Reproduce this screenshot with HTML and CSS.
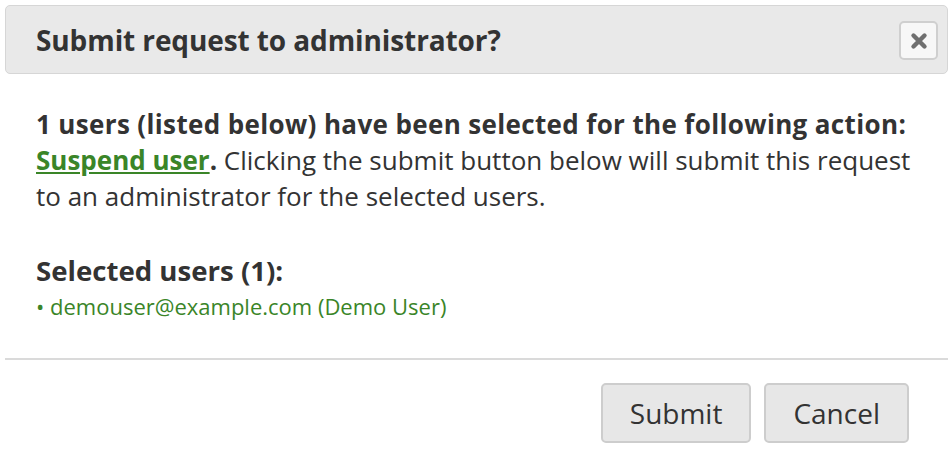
FILE: index.html
```html
<!DOCTYPE html>
<html>
<head>
<meta charset="utf-8">
<link rel="stylesheet" href="styles.css">
</head>
<body>
<div class="dialog">
  <div class="header">
    <h1 class="title">Submit request to administrator?</h1>
    <button class="close" aria-label="Close">
      <svg width="18" height="18" viewBox="0 0 18 18"><path d="M3.5 3.5 L14.5 14.5 M14.5 3.5 L3.5 14.5" stroke="#6f6f6f" stroke-width="4.4" stroke-linecap="round"/></svg>
    </button>
  </div>
  <div class="body">
    <p class="intro"><strong class="lead">1 users (listed below) have been selected for the following action:</strong><br><a class="action" href="#">Suspend user</a><strong>.</strong> Clicking the submit button below will submit this request to an administrator for the selected users.</p>
    <h2 class="subhead">Selected users (1):</h2>
    <ul class="users">
      <li>• demouser@example.com (Demo User)</li>
    </ul>
  </div>
  <div class="footer">
    <button class="btn">Submit</button>
    <button class="btn">Cancel</button>
  </div>
</div>
</body>
</html>
```

FILE: styles.css
```css
* { box-sizing: border-box; }
html, body { margin: 0; padding: 0; background: #fff; }
body { font-family: "Open Sans", "Noto Sans", sans-serif; color: #333; }
.dialog { padding: 5px 4px 0 5px; }
.header {
  height: 69px;
  background: #e9e9e9;
  border: 1px solid #d6d6d6;
  border-radius: 5px;
  display: flex;
  align-items: center;
  justify-content: space-between;
  padding: 0 9px 0 30px;
}
.title { margin: 0; font-size: 28px; font-weight: 700; color: #333; letter-spacing: -0.1px; }
.close {
  width: 39px; height: 39px;
  background: #f7f7f7;
  border: 2px solid #cfcfcf;
  border-radius: 5px;
  display: flex; align-items: center; justify-content: center;
  padding: 0;
  margin-top: 2px;
}
.body { padding: 32px 31px 0 31px; }
.intro { margin: 0; font-size: 26px; line-height: 36px; }
.lead { letter-spacing: 0.36px; }
.action { color: #3a8528; font-weight: 700; text-decoration: underline; }
.subhead { margin: 38px 0 0 0; font-size: 27.6px; line-height: 36px; font-weight: 700; }
.users { list-style: none; margin: 0; padding: 0; font-size: 22px; line-height: 36px; color: #3a8528; }
.footer {
  margin-top: 34px;
  border-top: 2px solid #dadada;
  display: flex;
  justify-content: flex-end;
  gap: 13px;
  padding: 23px 39px 0 0;
}
.btn {
  font-family: "Open Sans", "Noto Sans", sans-serif;
  font-size: 28px;
  color: #333;
  background: #e7e7e7;
  border: 2px solid #cdcdcd;
  border-radius: 5px;
  height: 60px;
  padding: 0 27px;
}
```
